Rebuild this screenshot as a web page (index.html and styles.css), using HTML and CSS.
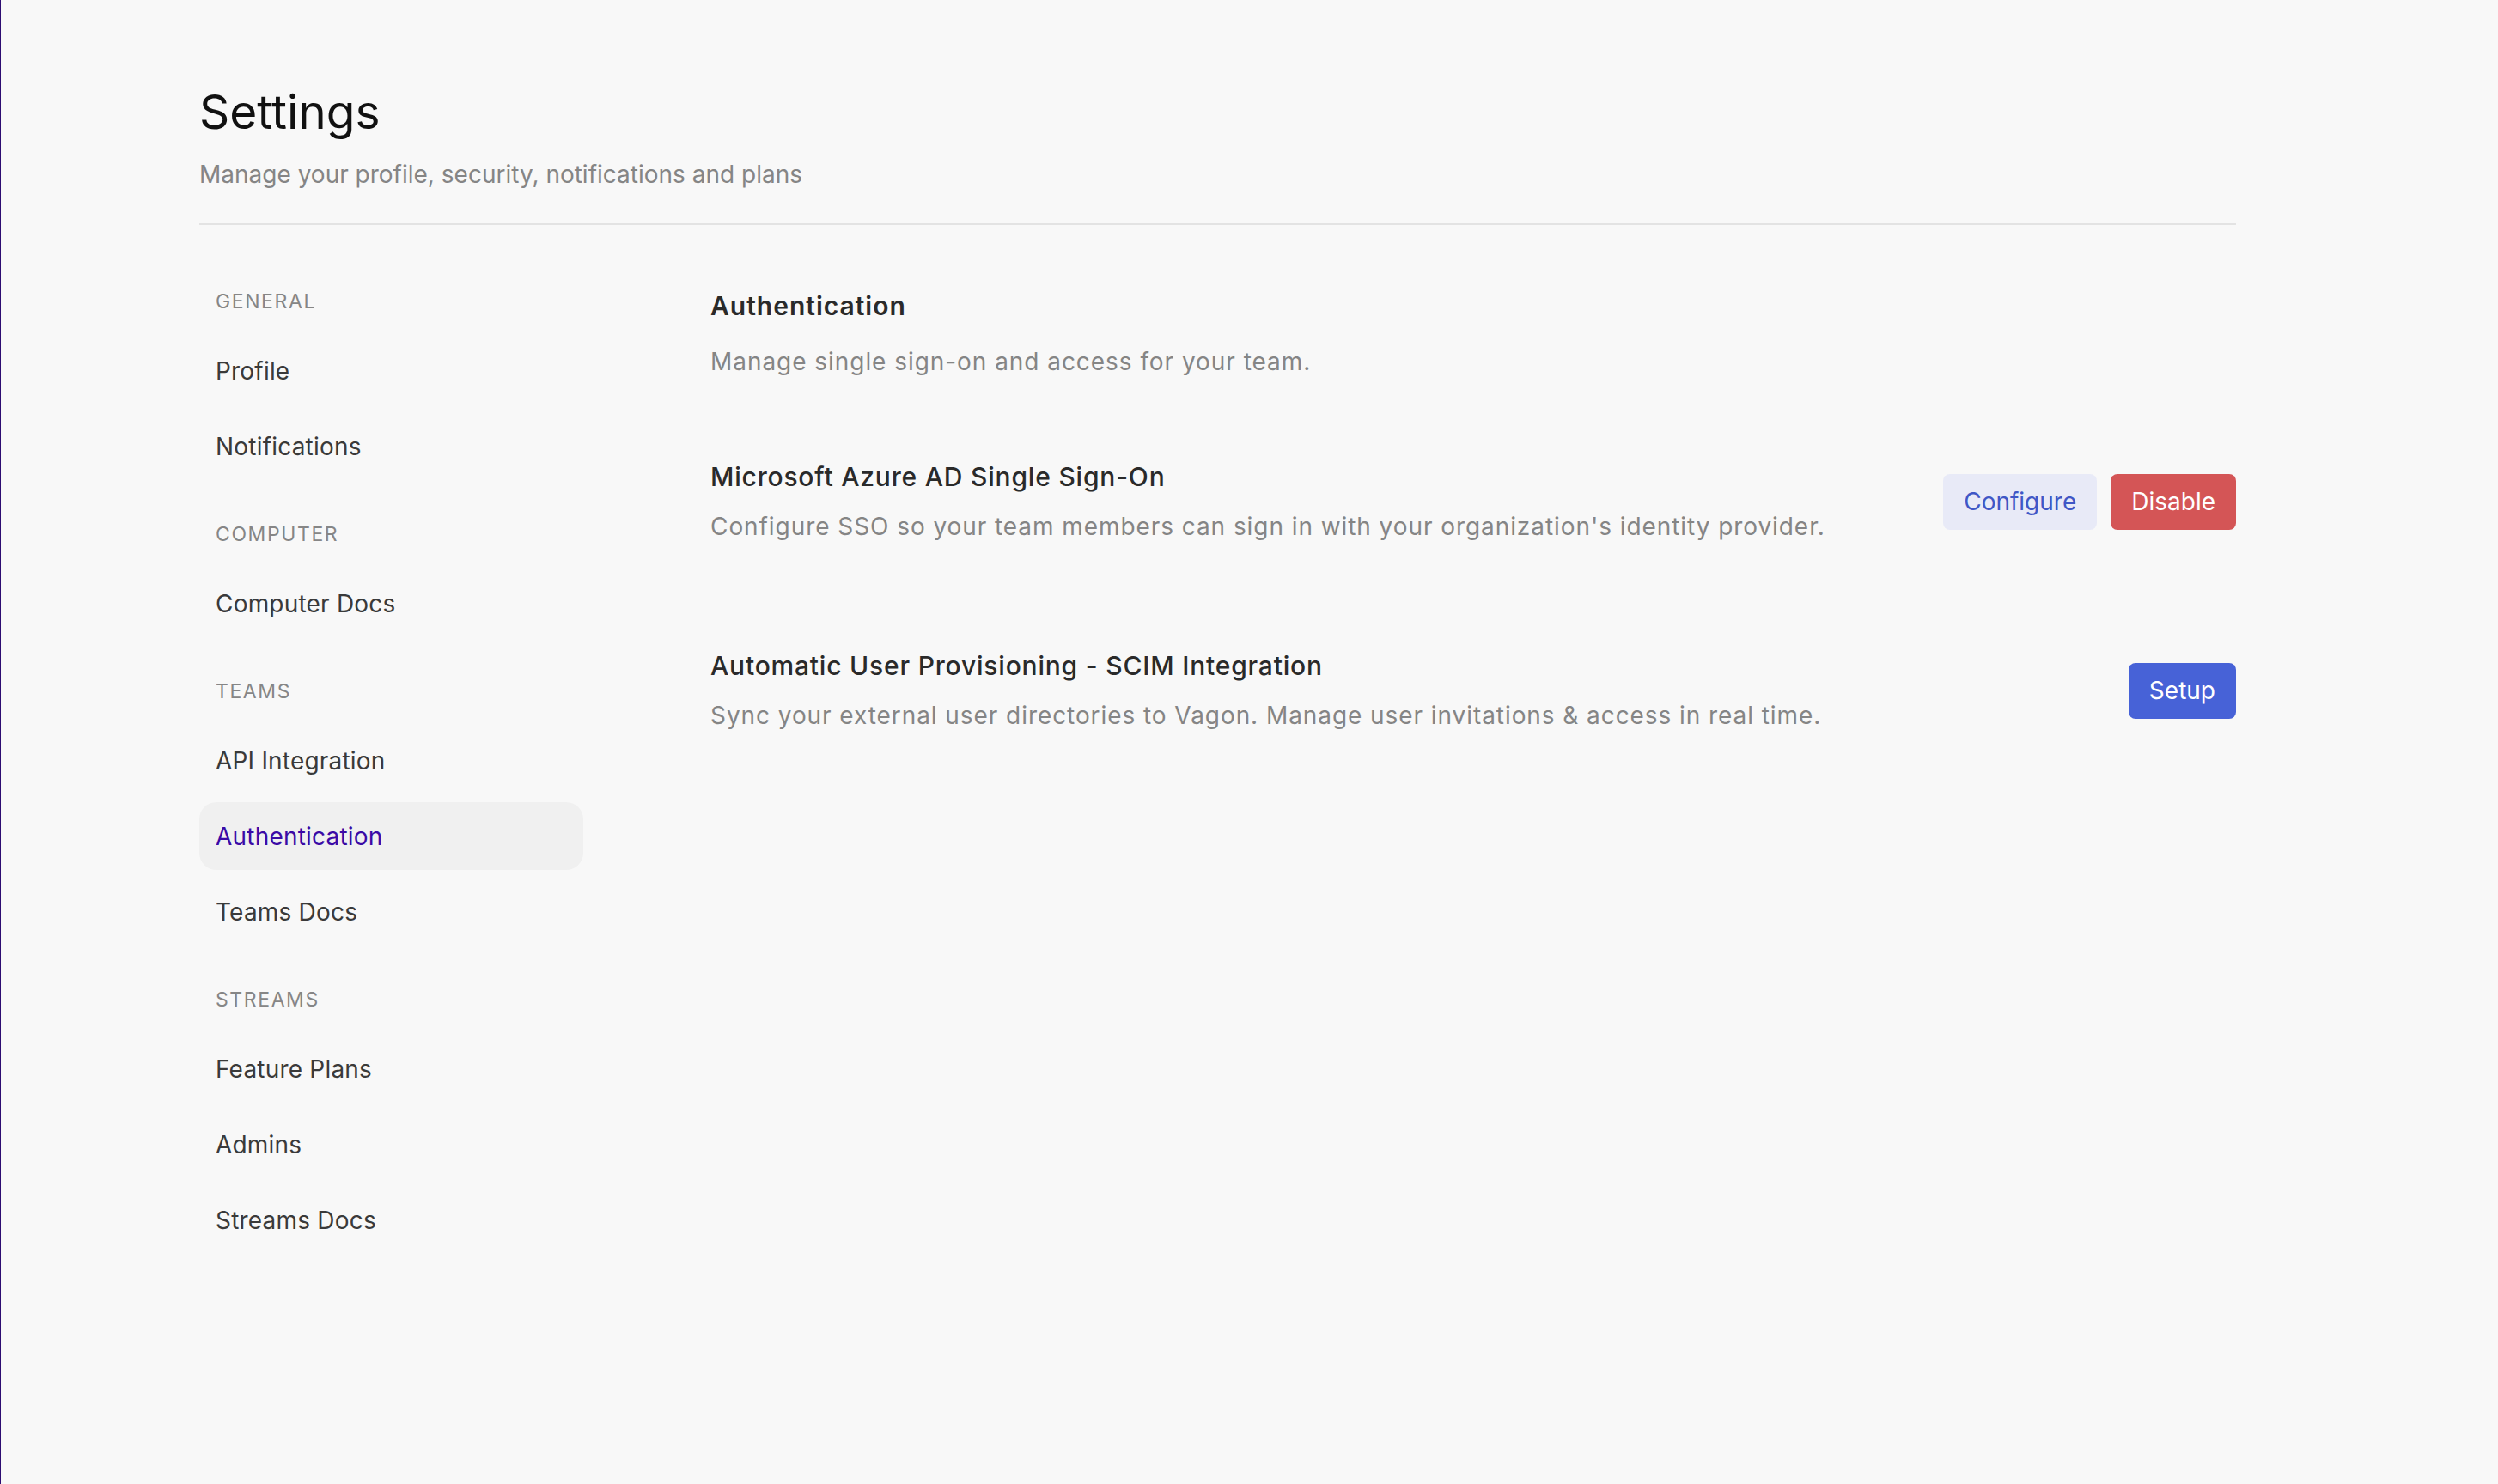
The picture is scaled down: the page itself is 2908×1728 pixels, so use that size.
FILE: index.html
```html
<!DOCTYPE html>
<html lang="en">
<head>
<meta charset="utf-8">
<title>Settings</title>
<link rel="stylesheet" href="styles.css">
</head>
<body>
<div class="page">
  <div class="container">
    <header class="header">
      <h1 class="title">Settings</h1>
      <p class="subtitle">Manage your profile, security, notifications and plans</p>
    </header>
    <div class="layout">
      <aside class="sidebar">
        <div class="section">
          <div class="section-label">General</div>
          <a class="nav-item">Profile</a>
          <a class="nav-item">Notifications</a>
        </div>
        <div class="section">
          <div class="section-label">Computer</div>
          <a class="nav-item">Computer Docs</a>
        </div>
        <div class="section">
          <div class="section-label">Teams</div>
          <a class="nav-item">API Integration</a>
          <a class="nav-item active">Authentication</a>
          <a class="nav-item">Teams Docs</a>
        </div>
        <div class="section">
          <div class="section-label">Streams</div>
          <a class="nav-item">Feature Plans</a>
          <a class="nav-item">Admins</a>
          <a class="nav-item">Streams Docs</a>
        </div>
      </aside>
      <main class="main">
        <div class="main-head">
          <h2 class="main-title">Authentication</h2>
          <p class="main-sub">Manage single sign-on and access for your team.</p>
        </div>
        <div class="rows">
          <div class="row">
            <div class="row-text">
              <div class="row-title">Microsoft Azure AD Single Sign-On</div>
              <div class="row-desc">Configure SSO so your team members can sign in with your organization's identity provider.</div>
            </div>
            <div class="actions">
              <button class="btn btn-soft">Configure</button>
              <button class="btn btn-danger">Disable</button>
            </div>
          </div>
          <div class="row">
            <div class="row-text">
              <div class="row-title">Automatic User Provisioning - SCIM Integration</div>
              <div class="row-desc">Sync your external user directories to Vagon. Manage user invitations &amp; access in real time.</div>
            </div>
            <div class="actions">
              <button class="btn btn-primary">Setup</button>
            </div>
          </div>
        </div>
      </main>
    </div>
  </div>
</div>
</body>
</html>
```

FILE: styles.css
```css
* { box-sizing: border-box; }

html, body {
  margin: 0;
  padding: 0;
  background: #f8f8f8;
}

body {
  font-family: "Inter", "Liberation Sans", sans-serif;
  color: #333333;
}

.page {
  min-height: 100vh;
  border-left: 1px solid #2d0c72;
  padding-left: 231px;
}

.container {
  width: 2371px;
}

.header {
  padding-top: 98px;
  padding-bottom: 39px;
  border-bottom: 2px solid #e3e3e3;
}

.title {
  margin: 0;
  font-size: 55px;
  line-height: 64px;
  font-weight: 400;
  color: #111111;
}

.subtitle {
  margin: 23px 0 0;
  font-size: 28px;
  line-height: 36px;
  color: #858585;
}

.layout {
  display: flex;
  margin-top: 74px;
  align-items: flex-start;
}

.sidebar {
  width: 503px;
  padding-right: 55px;
  border-right: 1px solid #eeeeee;
  display: flex;
  flex-direction: column;
  gap: 48px;
}

.section {
  display: flex;
  flex-direction: column;
  gap: 9px;
}

.section-label {
  height: 30px;
  line-height: 30px;
  margin-bottom: 17px;
  padding-left: 19px;
  font-size: 23px;
  letter-spacing: 1.6px;
  text-transform: uppercase;
  color: #868686;
}

.nav-item {
  display: flex;
  align-items: center;
  height: 79px;
  padding-left: 19px;
  border-radius: 20px;
  font-size: 28px;
  letter-spacing: 0.2px;
  color: #3a3a3a;
  text-decoration: none;
}

.nav-item.active {
  background: #f0f0f0;
  color: #3b0aa6;
}

.main {
  flex: 1;
  padding-left: 92px;
}

.main-title {
  margin: 0;
  font-size: 30px;
  line-height: 40px;
  font-weight: 600;
  letter-spacing: 1px;
  color: #2a2a2a;
}

.main-sub {
  margin: 25px 0 0;
  font-size: 28px;
  line-height: 40px;
  letter-spacing: 0.95px;
  color: #858585;
}

.rows {
  margin-top: 94px;
  display: flex;
  flex-direction: column;
  gap: 122px;
}

.row {
  display: flex;
  align-items: center;
  justify-content: space-between;
}

.row-title {
  font-size: 30px;
  line-height: 40px;
  font-weight: 500;
  letter-spacing: 0.8px;
  color: #2a2a2a;
}

.row-desc {
  margin-top: 18px;
  font-size: 28px;
  line-height: 40px;
  letter-spacing: 0.93px;
  color: #858585;
}

.actions {
  display: flex;
  gap: 16px;
}

.btn {
  height: 65px;
  padding: 0 24px;
  border: none;
  border-radius: 8px;
  font-family: "Inter", "Liberation Sans", sans-serif;
  font-size: 28px;
  font-weight: 400;
  cursor: pointer;
}

.btn-soft {
  background: #e8eaf7;
  color: #3f57c6;
}

.btn-danger {
  background: #d45556;
  color: #ffffff;
}

.btn-primary {
  background: #4762d7;
  color: #ffffff;
}
```
